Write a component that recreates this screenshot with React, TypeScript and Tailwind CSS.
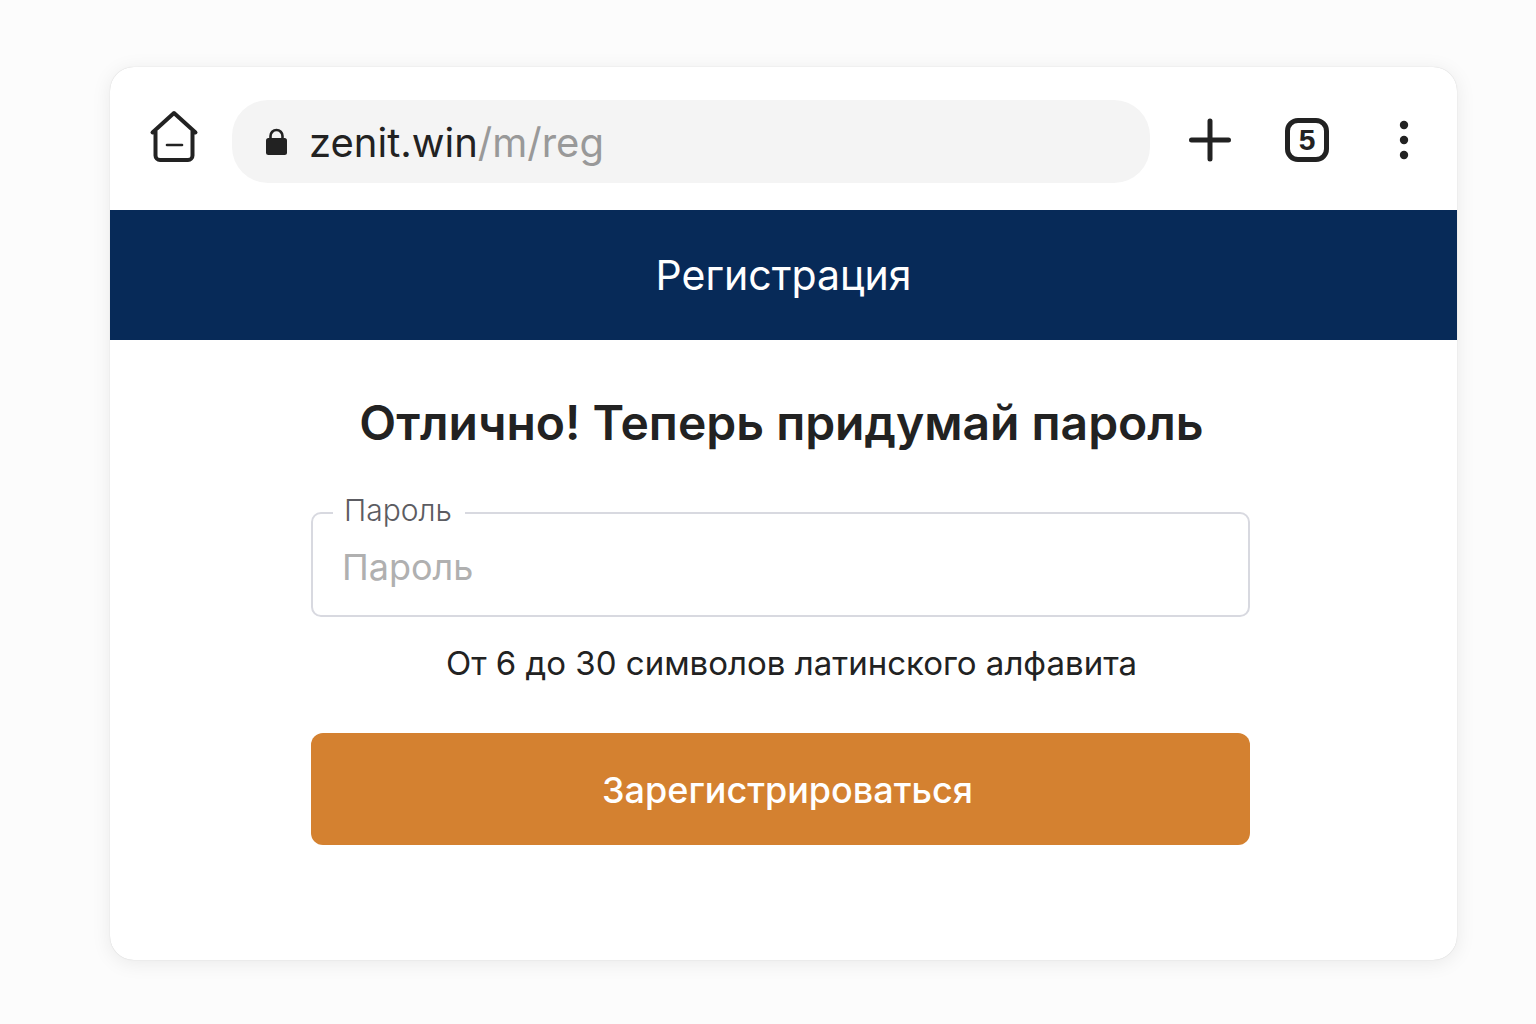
import React from 'react';

export default function App() {
  return (
    <div className="min-h-screen bg-[#fcfcfc] pt-[67px] pr-[79px] pb-16 pl-[110px] font-['Inter',sans-serif] text-[#222222]">
      <main className="overflow-hidden rounded-3xl bg-white pb-[115px] shadow-[0_3px_20px_rgba(0,0,0,0.08),0_0_1px_rgba(0,0,0,0.2)]">
        <header className="flex items-center pt-[33px] pr-[43px] pb-[27px] pl-[38px]">
          <button type="button" aria-label="Домой" className="mr-8 mb-1 shrink-0">
            <svg width="52" height="56" viewBox="0 0 52 56" fill="none" stroke="currentColor" strokeWidth="4" strokeLinecap="round" strokeLinejoin="round" className="-mt-2">
              <path d="M4.500 24.500 26 5l21.500 19.500M7.500 23v24.500a4.500 4.500 0 0 0 4.500 4.500h28a4.500 4.500 0 0 0 4.500-4.500V23" />
              <path d="M19 37h15" strokeWidth="2.600" />
            </svg>
          </button>
          <div className="flex h-[83px] flex-1 items-center rounded-[36px] bg-[#f4f4f4] pl-[34px]">
            <svg width="21" height="28" viewBox="0 0 21 28" aria-hidden="true">
              <rect y="10" width="21" height="17" rx="2.500" fill="currentColor" />
              <path d="M4.500 12V8a6 6 0 0 1 12 0v4" fill="none" stroke="currentColor" strokeWidth="2.600" />
            </svg>
            <span className="mt-0.5 ml-[22px] text-[40px] leading-[48px]">zenit.win<span className="text-[#999999]">/m/reg</span></span>
          </div>
          <button type="button" aria-label="Новая вкладка" className="mb-1 ml-[38px] shrink-0">
            <svg width="44" height="44" viewBox="0 0 44 44" stroke="currentColor" strokeWidth="5" strokeLinecap="round"><path d="M22 3v38M3.500 22h37" /></svg>
          </button>
          <button type="button" aria-label="Вкладки: 5" className="mb-1 ml-[53px] flex size-11 shrink-0 items-center justify-center rounded-[13px] border-[5px] border-[#222222] font-['Liberation_Sans',sans-serif] text-[30px] font-bold">5</button>
          <button type="button" aria-label="Меню" className="mb-1 ml-[65px] shrink-0">
            <svg width="20" height="44" viewBox="0 0 20 44" fill="currentColor"><circle cx="10" cy="7" r="4.200" /><circle cx="10" cy="22" r="4.200" /><circle cx="10" cy="37" r="4.200" /></svg>
          </button>
        </header>
        <div className="bg-[#072a58] py-10 text-center text-[41px] leading-[50px] text-white">Регистрация</div>
        <form className="mr-[207px] ml-[201px] text-center" onSubmit={(e) => e.preventDefault()}>
          <h1 className="pt-[54px] pl-0.5 text-[48px] leading-[58px] font-semibold">Отлично! Теперь придумай пароль</h1>
          <div className="relative mt-[60px]">
            <label htmlFor="password" className="absolute -top-5 left-[22px] bg-white pr-[13px] pl-[11px] text-[30px] leading-9 font-light text-[#5c5c62]">Пароль</label>
            <input id="password" type="password" placeholder="Пароль" className="h-[105px] w-full rounded-[10px] border-2 border-[#d8d9e0] px-[29px] pt-1 text-[36px] outline-none placeholder:text-[#b0b0b0]" />
          </div>
          <p className="mt-[25px] mb-[49px] pl-[22px] text-[33px] leading-[42px]">От 6 до 30 символов латинского алфавита</p>
          <button type="submit" className="h-28 w-full rounded-xl bg-[#d48130] pt-0.5 pl-[14px] text-[36px] font-medium text-white">Зарегистрироваться</button>
        </form>
      </main>
    </div>
  );
}
